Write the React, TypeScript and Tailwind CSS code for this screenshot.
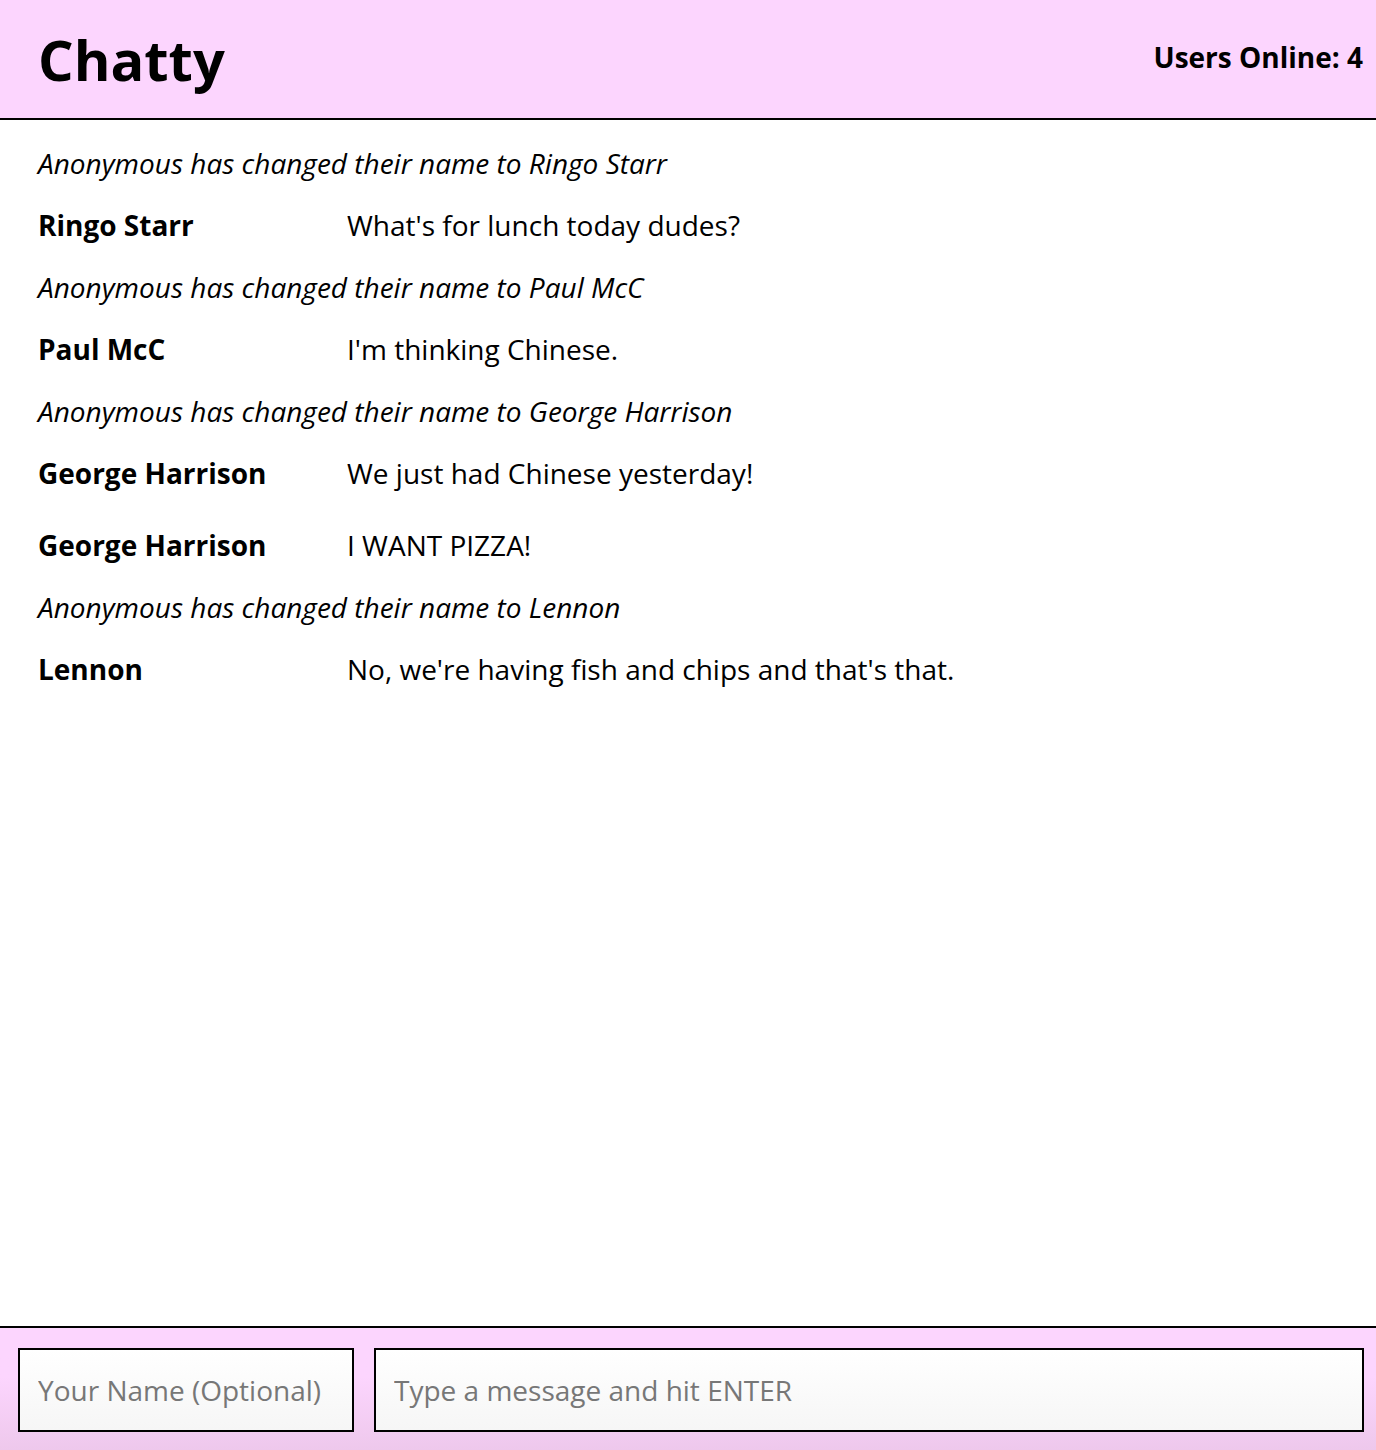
import React from "react";

type Entry =
  | { kind: "notice"; text: string }
  | { kind: "message"; user: string; text: string; gap?: boolean };

const entries: Entry[] = [
  { kind: "notice", text: "Anonymous has changed their name to Ringo Starr" },
  { kind: "message", user: "Ringo Starr", text: "What's for lunch today dudes?" },
  { kind: "notice", text: "Anonymous has changed their name to Paul McC" },
  { kind: "message", user: "Paul McC", text: "I'm thinking Chinese." },
  { kind: "notice", text: "Anonymous has changed their name to George Harrison" },
  { kind: "message", user: "George Harrison", text: "We just had Chinese yesterday!" },
  { kind: "message", user: "George Harrison", text: "I WANT PIZZA!", gap: true },
  { kind: "notice", text: "Anonymous has changed their name to Lennon" },
  { kind: "message", user: "Lennon", text: "No, we're having fish and chips and that's that." },
];

export default function App() {
  return (
    <div
      className="flex min-h-[1450px] flex-col bg-white text-black"
      style={{ fontFamily: '"Open Sans", "Noto Sans", sans-serif' }}
    >
      {/* Navbar */}
      <nav className="flex h-[120px] items-center justify-between border-b-2 border-black bg-[#fcd5fe] pl-[38px] pr-[13px]">
        <h1 className="text-[56px] font-bold leading-none">Chatty</h1>
        <span className="mb-[4px] text-[28px] font-bold">Users Online: 4</span>
      </nav>

      {/* Messages */}
      <main className="flex-1 px-[38px] pt-[12px]">
        {entries.map((e, i) =>
          e.kind === "notice" ? (
            <div key={i} className="flex h-[62px] items-center text-[28px] italic">
              {e.text}
            </div>
          ) : (
            <div
              key={i}
              className={`flex h-[62px] items-center text-[28px] ${e.gap ? "mt-[10px]" : ""}`}
            >
              <span className="w-[309px] shrink-0 font-bold">{e.user}</span>
              <span>{e.text}</span>
            </div>
          )
        )}
      </main>

      {/* Chat bar */}
      <footer className="flex h-[124px] gap-[20px] border-t-2 border-black bg-gradient-to-b from-[#fcd5fe] from-40% to-[#eec8ec] pb-[18px] pl-[18px] pr-[12px] pt-[20px]">
        <input
          className="h-[84px] w-[336px] border-2 border-black bg-gradient-to-b from-white to-[#f6f6f6] px-[18px] text-[28px] outline-none placeholder:text-[#777]"
          placeholder="Your Name (Optional)"
        />
        <input
          className="h-[84px] flex-1 border-2 border-black bg-gradient-to-b from-white to-[#f6f6f6] px-[18px] text-[28px] outline-none placeholder:text-[#777]"
          placeholder="Type a message and hit ENTER"
        />
      </footer>
    </div>
  );
}
